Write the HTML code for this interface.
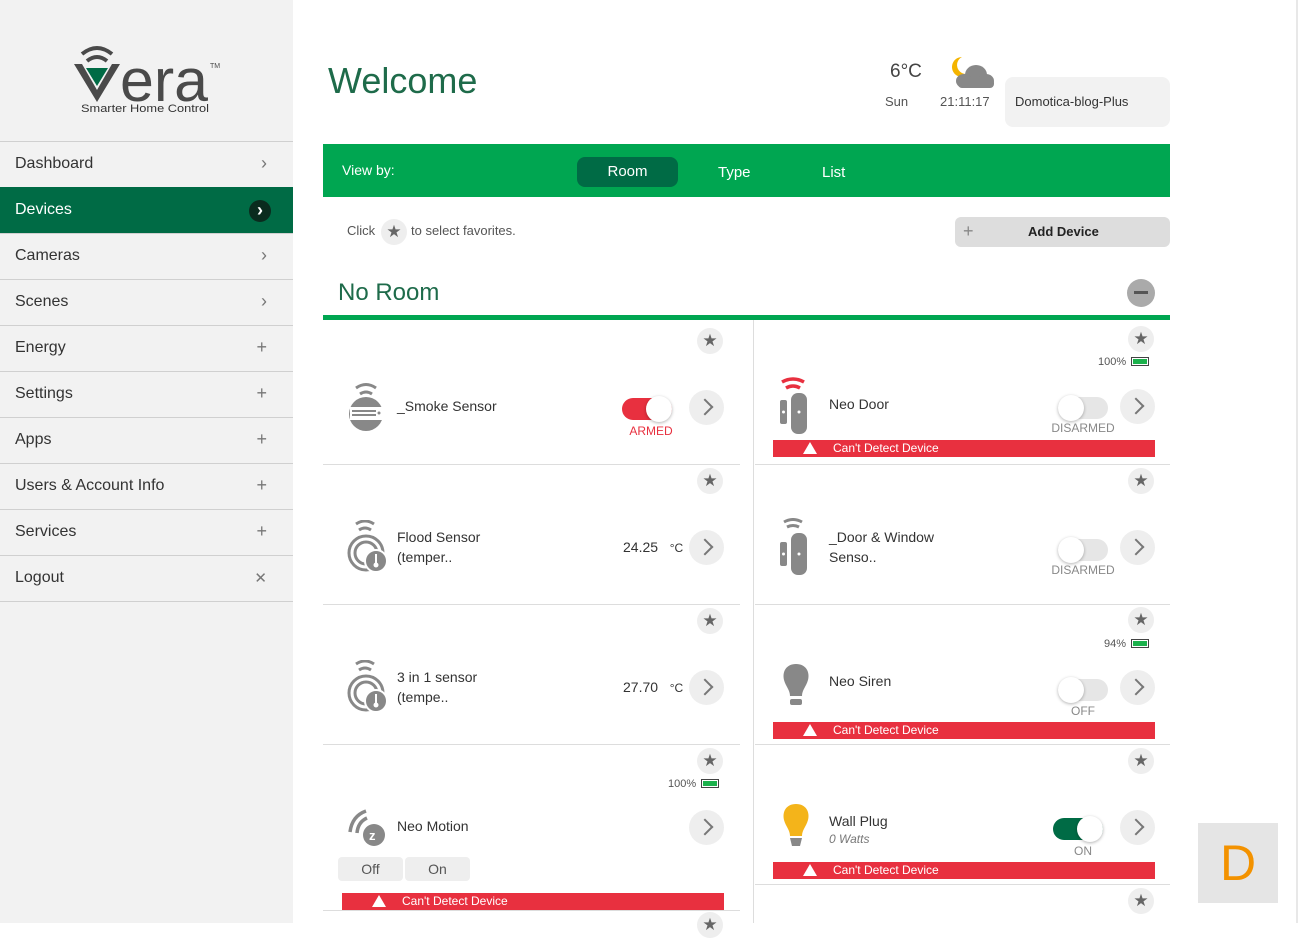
<!DOCTYPE html>
<html><head><meta charset="utf-8"><style>
*{margin:0;padding:0;box-sizing:border-box}
body{width:1298px;height:923px;overflow:hidden;background:#fff;font-family:"Liberation Sans",sans-serif;position:relative;color:#333}
.a{position:absolute}
#side{left:0;top:0;width:293px;height:923px;background:#f2f2f2}
.mi{position:absolute;left:0;width:293px;height:46px;border-top:1px solid #d0d0d0;font-size:16px;color:#333;padding:13px 15px}
.mi span{position:absolute;right:26px;top:11px;color:#777;font-size:18px}
.star{position:absolute;width:26px;height:26px;border-radius:50%;background:#eee;color:#666;font-size:17px;text-align:center;line-height:26px}
.chev{position:absolute;width:35px;height:35px;border-radius:50%;background:#eee}
.chev:after{content:"";position:absolute;left:10px;top:11px;width:10px;height:10px;border-right:2px solid #777;border-top:2px solid #777;transform:rotate(45deg)}
.nm{position:absolute;font-size:14px;color:#333;line-height:20px}
.tg{position:absolute;width:50px;height:22px;border-radius:11px;background:#e6e6e6}
.tg i{position:absolute;top:-2px;width:26px;height:26px;border-radius:50%;background:#fff;box-shadow:0 1px 3px rgba(0,0,0,.3)}
.tl{position:absolute;font-size:12px;color:#888;text-align:center;width:80px}
.err{position:absolute;height:17px;background:#e8303f;color:#fff;font-size:12px;line-height:17px}
.err b{position:absolute;left:30px;top:2px;width:0;height:0;border-left:7px solid transparent;border-right:7px solid transparent;border-bottom:12px solid #fff}
.err span{position:absolute;left:60px}
.hl{position:absolute;height:1px;background:#ddd}
.bat{position:absolute;font-size:11px;color:#555}
.bat i{display:inline-block;width:18px;height:9px;border:1px solid #444;margin-left:5px;vertical-align:-1px;background:#1bb14c;box-shadow:inset 0 0 0 1px #fff}
</style></head><body>
<div id="side" class="a">
 <svg class="a" style="left:70px;top:40px" width="150" height="80" viewBox="0 0 150 80">
  <path d="M12 14 Q27 2 42 14" stroke="#4a4a4a" stroke-width="4" fill="none"/>
  <path d="M17 21 Q27 13 37 21" stroke="#4a4a4a" stroke-width="4" fill="none"/>
  <path d="M4 24 L27 62 L50 24 L42 24 L27 50 L12 24Z" fill="#4a4a4a"/>
  <path d="M16 28 L38 28 L27 46Z" fill="#006b45"/>
  <text x="50" y="61" font-family="Liberation Sans" font-size="60" textLength="88" lengthAdjust="spacingAndGlyphs" fill="#4a4a4a">era</text>
  <text x="140" y="28" font-size="7" fill="#4a4a4a">TM</text>
  <text x="11" y="72" font-size="11" textLength="128" lengthAdjust="spacingAndGlyphs" fill="#333">Smarter Home Control</text>
 </svg>
 <div class="mi" style="top:141px">Dashboard<span>&#x203A;</span></div>
 <div class="mi" style="top:187px;background:#006b45;color:#fff;border-top-color:#006b45">Devices<span style="right:22px;top:12px;width:22px;height:22px;border-radius:50%;background:#0a2b1e;color:#fff;text-align:center;line-height:20px;font-weight:bold">&#x203A;</span></div>
 <div class="mi" style="top:233px">Cameras<span>&#x203A;</span></div>
 <div class="mi" style="top:279px">Scenes<span>&#x203A;</span></div>
 <div class="mi" style="top:325px">Energy<span>+</span></div>
 <div class="mi" style="top:371px">Settings<span>+</span></div>
 <div class="mi" style="top:417px">Apps<span>+</span></div>
 <div class="mi" style="top:463px">Users &amp; Account Info<span>+</span></div>
 <div class="mi" style="top:509px">Services<span>+</span></div>
 <div class="mi" style="top:555px;border-bottom:1px solid #d0d0d0;height:47px">Logout<span style="font-size:15px;top:13px">&#x2715;</span></div>
</div>
<div class="a" style="left:1296px;top:0;width:2px;height:923px;background:#e8e8e8"></div>

<div class="a" style="left:328px;top:60px;font-size:36px;color:#1e6b4a">Welcome</div>
<div class="a" style="left:890px;top:61px;font-size:19px;color:#444">6°C</div>
<div class="a" style="left:885px;top:94px;font-size:13px;color:#555">Sun</div>
<div class="a" style="left:940px;top:94px;font-size:13px;color:#555">21:11:17</div>
<svg class="a" style="left:948px;top:55px" width="48" height="36"><path d="M14 2 A10 10 0 1 0 22 18 A8 8 0 0 1 14 2Z" fill="#f4b400"/><ellipse cx="28" cy="20" rx="11" ry="10" fill="#888"/><ellipse cx="16" cy="26" rx="8" ry="7" fill="#888"/><ellipse cx="38" cy="26" rx="8" ry="7" fill="#888"/><rect x="10" y="24" width="36" height="9" rx="4" fill="#888"/></svg>
<div class="a" style="left:1005px;top:77px;width:165px;height:50px;border-radius:8px;background:#f2f2f2;font-size:13px;color:#333;padding:17px 10px">Domotica-blog-Plus</div>

<div class="a" style="left:323px;top:144px;width:847px;height:53px;background:#00a651"></div>
<div class="a" style="left:342px;top:162px;font-size:14px;color:#fff">View by:</div>
<div class="a" style="left:577px;top:157px;width:101px;height:30px;border-radius:8px;background:#006b45;color:#fff;font-size:15px;text-align:center;line-height:30px">Room</div>
<div class="a" style="left:718px;top:164px;font-size:15px;color:#fff">Type</div>
<div class="a" style="left:822px;top:164px;font-size:15px;color:#fff">List</div>

<div class="a" style="left:347px;top:223px;font-size:13px;color:#555">Click</div>
<div class="star" style="left:381px;top:219px">★</div>
<div class="a" style="left:411px;top:223px;font-size:13px;color:#555">to select favorites.</div>
<div class="a" style="left:955px;top:217px;width:215px;height:30px;border-radius:6px;background:#ddd"><span class="a" style="left:8px;top:4px;font-size:18px;color:#888">+</span><span class="a" style="left:73px;top:7px;font-size:13px;font-weight:bold;color:#222">Add Device</span></div>

<div class="a" style="left:338px;top:279px;font-size:24px;color:#1e6b4a">No Room</div>
<div class="a" style="left:1127px;top:279px;width:28px;height:28px;border-radius:50%;background:#aaa"><i class="a" style="left:7px;top:12px;width:14px;height:3px;background:#555"></i></div>
<div class="a" style="left:323px;top:315px;width:847px;height:5px;background:#00a651"></div>
<div class="a" style="left:753px;top:320px;width:1px;height:603px;background:#ddd"></div>

<!-- left column -->
<div class="star" style="left:697px;top:328px">★</div>
<svg class="a" style="left:348px;top:382px" width="38" height="52"><path d="M8 6 Q18 -1 28 6" stroke="#888" stroke-width="3" fill="none"/><path d="M12 12 Q18 8 24 12" stroke="#888" stroke-width="3" fill="none"/><circle cx="18" cy="32" r="17" fill="#888"/><rect x="2" y="25" width="34" height="13" fill="#fff"/><rect x="4" y="28" width="24" height="2" fill="#888"/><rect x="4" y="32" width="24" height="2" fill="#888"/><circle cx="31" cy="31" r="1.5" fill="#888"/></svg>
<div class="nm" style="left:397px;top:396px">_Smoke Sensor</div>
<div class="tg" style="left:622px;top:398px;background:#e8303f"><i style="left:24px"></i></div>
<div class="tl" style="left:611px;top:424px;color:#e8303f">ARMED</div>
<div class="chev" style="left:689px;top:390px"></div>
<div class="hl" style="left:323px;top:464px;width:417px"></div>

<div class="star" style="left:697px;top:468px">★</div>
<svg class="a" style="left:346px;top:520px" width="42" height="56"><path d="M10 4 Q19 -2 28 4" stroke="#888" stroke-width="3" fill="none"/><path d="M13 10 Q19 6 25 10" stroke="#888" stroke-width="3" fill="none"/><circle cx="20" cy="33" r="17" fill="none" stroke="#888" stroke-width="3"/><circle cx="20" cy="33" r="11" fill="none" stroke="#888" stroke-width="3"/><circle cx="30" cy="41" r="11" fill="#888" stroke="#fff" stroke-width="2"/><rect x="29" y="34" width="2" height="9" fill="#fff"/><circle cx="30" cy="45" r="2.5" fill="#fff"/></svg>
<div class="nm" style="left:397px;top:527px">Flood Sensor<br>(temper..</div>
<div class="a" style="left:623px;top:539px;font-size:14px;color:#333">24.25 &nbsp;&nbsp;<span style="font-size:12px">°C</span></div>
<div class="chev" style="left:689px;top:530px"></div>
<div class="hl" style="left:323px;top:604px;width:417px"></div>

<div class="star" style="left:697px;top:608px">★</div>
<svg class="a" style="left:346px;top:660px" width="42" height="56"><path d="M10 4 Q19 -2 28 4" stroke="#888" stroke-width="3" fill="none"/><path d="M13 10 Q19 6 25 10" stroke="#888" stroke-width="3" fill="none"/><circle cx="20" cy="33" r="17" fill="none" stroke="#888" stroke-width="3"/><circle cx="20" cy="33" r="11" fill="none" stroke="#888" stroke-width="3"/><circle cx="30" cy="41" r="11" fill="#888" stroke="#fff" stroke-width="2"/><rect x="29" y="34" width="2" height="9" fill="#fff"/><circle cx="30" cy="45" r="2.5" fill="#fff"/></svg>
<div class="nm" style="left:397px;top:667px">3 in 1 sensor<br>(tempe..</div>
<div class="a" style="left:623px;top:679px;font-size:14px;color:#333">27.70 &nbsp;&nbsp;<span style="font-size:12px">°C</span></div>
<div class="chev" style="left:689px;top:670px"></div>
<div class="hl" style="left:323px;top:744px;width:417px"></div>

<div class="star" style="left:697px;top:748px">★</div>
<div class="bat" style="left:668px;top:778px">100%<i></i></div>
<svg class="a" style="left:346px;top:808px" width="42" height="40"><path d="M4 24 Q6 8 20 3" stroke="#888" stroke-width="3.5" fill="none"/><path d="M11 25 Q12 14 21 10" stroke="#888" stroke-width="3.5" fill="none"/><circle cx="28" cy="27" r="11" fill="#888"/><text x="23" y="32" font-size="13" font-weight="bold" fill="#fff">z</text></svg>
<div class="nm" style="left:397px;top:816px">Neo Motion</div>
<div class="chev" style="left:689px;top:810px"></div>
<div class="a" style="left:338px;top:857px;width:65px;height:24px;border-radius:4px;background:#eee;font-size:14px;color:#555;text-align:center;line-height:24px">Off</div>
<div class="a" style="left:405px;top:857px;width:65px;height:24px;border-radius:4px;background:#eee;font-size:14px;color:#555;text-align:center;line-height:24px">On</div>
<div class="err" style="left:342px;top:893px;width:382px"><b></b><span>Can't Detect Device</span></div>
<div class="hl" style="left:323px;top:910px;width:417px"></div>
<div class="star" style="left:697px;top:912px">★</div>

<!-- right column -->
<div class="star" style="left:1128px;top:326px">★</div>
<div class="bat" style="left:1098px;top:356px">100%<i></i></div>
<svg class="a" style="left:778px;top:376px" width="40" height="60"><path d="M4 6 Q15 0 26 6" stroke="#e8303f" stroke-width="3.5" fill="none"/><path d="M8 12 Q15 8 22 12" stroke="#e8303f" stroke-width="3.5" fill="none"/><rect x="2" y="24" width="7" height="24" rx="2" fill="#888"/><rect x="13" y="17" width="16" height="41" rx="7" fill="#888"/><circle cx="5.5" cy="36" r="1.5" fill="#fff"/><circle cx="21" cy="36" r="1.5" fill="#fff"/></svg>
<div class="nm" style="left:829px;top:394px">Neo Door</div>
<div class="tg" style="left:1058px;top:397px"><i style="left:0"></i></div>
<div class="tl" style="left:1043px;top:421px">DISARMED</div>
<div class="chev" style="left:1120px;top:389px"></div>
<div class="err" style="left:773px;top:440px;width:382px"><b></b><span>Can't Detect Device</span></div>
<div class="hl" style="left:755px;top:464px;width:415px"></div>

<div class="star" style="left:1128px;top:468px">★</div>
<svg class="a" style="left:778px;top:518px" width="40" height="60"><path d="M6 4 Q15 -1 24 4" stroke="#888" stroke-width="3" fill="none"/><path d="M9 9 Q15 6 21 9" stroke="#888" stroke-width="3" fill="none"/><rect x="2" y="24" width="7" height="24" rx="2" fill="#888"/><rect x="13" y="15" width="16" height="42" rx="7" fill="#888"/><circle cx="5.5" cy="36" r="1.5" fill="#fff"/><circle cx="21" cy="36" r="1.5" fill="#fff"/></svg>
<div class="nm" style="left:829px;top:527px">_Door &amp; Window<br>Senso..</div>
<div class="tg" style="left:1058px;top:539px"><i style="left:0"></i></div>
<div class="tl" style="left:1043px;top:563px">DISARMED</div>
<div class="chev" style="left:1120px;top:530px"></div>
<div class="hl" style="left:755px;top:604px;width:415px"></div>

<div class="star" style="left:1128px;top:607px">★</div>
<div class="bat" style="left:1104px;top:638px">94%<i></i></div>
<svg class="a" style="left:780px;top:662px" width="34" height="48"><path d="M16 2 C6 2 2 10 4 18 C6 25 10 28 10 34 L22 34 C22 28 26 25 28 18 C30 10 26 2 16 2Z" fill="#888"/><rect x="10" y="37" width="12" height="6" rx="2" fill="#888"/></svg>
<div class="nm" style="left:829px;top:671px">Neo Siren</div>
<div class="tg" style="left:1058px;top:679px"><i style="left:0"></i></div>
<div class="tl" style="left:1043px;top:704px">OFF</div>
<div class="chev" style="left:1120px;top:670px"></div>
<div class="err" style="left:773px;top:722px;width:382px"><b></b><span>Can't Detect Device</span></div>
<div class="hl" style="left:755px;top:744px;width:415px"></div>

<div class="star" style="left:1128px;top:748px">★</div>
<svg class="a" style="left:780px;top:802px" width="34" height="48"><path d="M16 2 C6 2 2 10 4 18 C6 25 10 28 10 34 L22 34 C22 28 26 25 28 18 C30 10 26 2 16 2Z" fill="#f4b41a"/><path d="M10 36 L22 36 L20 44 L12 44Z" fill="#888"/></svg>
<div class="nm" style="left:829px;top:811px">Wall Plug</div>
<div class="a" style="left:829px;top:832px;font-size:12px;font-style:italic;color:#777">0 Watts</div>
<div class="tg" style="left:1053px;top:818px;background:#006b45"><i style="left:24px"></i></div>
<div class="tl" style="left:1043px;top:844px">ON</div>
<div class="chev" style="left:1120px;top:810px"></div>
<div class="err" style="left:773px;top:862px;width:382px"><b></b><span>Can't Detect Device</span></div>
<div class="hl" style="left:755px;top:884px;width:415px"></div>
<div class="star" style="left:1128px;top:888px">★</div>

<div class="a" style="left:1198px;top:823px;width:80px;height:80px;background:#e5e5e5;color:#f39200;font-size:50px;text-align:center;line-height:80px">D</div>
</body></html>
